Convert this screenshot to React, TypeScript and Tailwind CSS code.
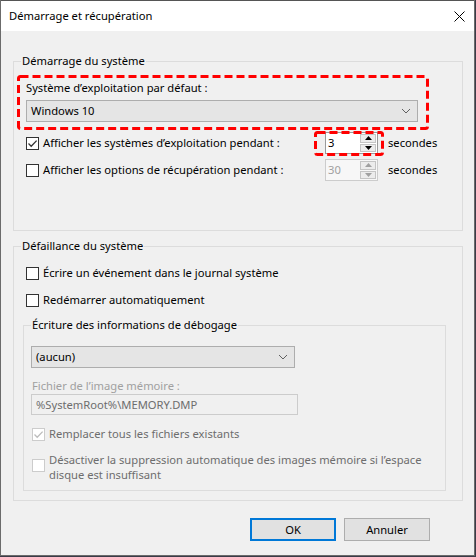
import type { ReactNode } from "react";

const font = "font-['Noto_Sans',sans-serif] text-[11.2px] leading-4";

function CheckBox({ checked, disabled }: { checked?: boolean; disabled?: boolean }) {
  return (
    <span
      className={`flex h-[13px] w-[13px] shrink-0 items-center justify-center border bg-white ${
        disabled ? "border-[#cccccc]" : "border-[#333333]"
      }`}
    >
      {checked && (
        <svg width="11" height="11" viewBox="0 0 11 11">
          <path
            d="M1.5 5.5 L4.2 8.2 L9.6 2.6"
            fill="none"
            stroke={disabled ? "#bcbcbc" : "#333333"}
            strokeWidth="1.3"
          />
        </svg>
      )}
    </span>
  );
}

function CheckRow({
  label,
  checked,
  disabled,
  className = "",
}: {
  label: ReactNode;
  checked?: boolean;
  disabled?: boolean;
  className?: string;
}) {
  return (
    <div className={`flex items-center gap-[4px] ${className}`}>
      <CheckBox checked={checked} disabled={disabled} />
      <span className={disabled ? "text-[#6d6d6d]" : "text-black"}>{label}</span>
    </div>
  );
}

function Arrow({ up, disabled }: { up?: boolean; disabled?: boolean }) {
  return (
    <svg width="7" height="4" viewBox="0 0 7 4">
      <path d={up ? "M0 4 L3.5 0 L7 4 Z" : "M0 0 L3.5 4 L7 0 Z"} fill={disabled ? "#a0a0a0" : "#000000"} />
    </svg>
  );
}

function Spinner({ value, disabled }: { value: string; disabled?: boolean }) {
  return (
    <div
      className={`flex h-[22px] w-[53px] border ${
        disabled ? "border-[#cccccc] bg-[#f7f7f7]" : "border-[#9a9a9a] bg-white"
      }`}
    >
      <span className={`flex-1 pl-[2px] leading-[20px] ${disabled ? "text-[#a0a0a0]" : "text-black"}`}>{value}</span>
      <div className="flex w-[17px] flex-col gap-[1px] py-[1px] pr-[1px]">
        <div className="flex flex-1 items-center justify-center border border-[#c4c4c4] bg-[#ececec]">
          <Arrow up disabled={disabled} />
        </div>
        <div className="flex flex-1 items-center justify-center border border-[#c4c4c4] bg-[#ececec]">
          <Arrow disabled={disabled} />
        </div>
      </div>
    </div>
  );
}

function Combo({ value, className = "" }: { value: string; className?: string }) {
  return (
    <div className={`flex h-[22px] items-center justify-between border border-[#adadad] bg-[#e5e5e5] pl-[4px] pr-[6px] ${className}`}>
      <span>{value}</span>
      <svg width="10" height="6" viewBox="0 0 10 6">
        <path d="M1 1 L5 5 L9 1" fill="none" stroke="#606060" strokeWidth="1" />
      </svg>
    </div>
  );
}

function DashedMark({ className }: { className: string }) {
  return (
    <svg className={`pointer-events-none absolute ${className}`} preserveAspectRatio="none">
      <rect
        x="1.5"
        y="1.5"
        width="calc(100% - 3px)"
        height="calc(100% - 3px)"
        rx="2"
        fill="none"
        stroke="#ff0000"
        strokeWidth="3"
        strokeDasharray="8 4"
      />
    </svg>
  );
}

export default function App() {
  return (
    <div className={`h-[557px] w-[476px] overflow-hidden bg-[#3b3b48] ${font}`}>
      <div className="h-[556px] w-[475px] border-x border-b border-[#6b6b6b] bg-[#f0f0f0]">
        {/* title bar */}
        <div className="flex h-[31px] items-center justify-between border-t border-[#555555] bg-white pl-[8px] pr-[9px]">
          <span className="text-black">Démarrage et récupération</span>
          <svg width="11" height="11" viewBox="0 0 11 11">
            <path d="M0.5 0.5 L10.5 10.5 M10.5 0.5 L0.5 10.5" stroke="#000000" strokeWidth="1" />
          </svg>
        </div>

        {/* startup */}
        <fieldset className="ml-[12px] mt-[22px] w-[450px] border border-[#dcdcdc] pb-[49px]">
          <legend className="ml-[7px] px-[1px]">Démarrage du système</legend>

          <div className="relative ml-[3px] mt-[6px] w-[412px] pb-[8px] pl-[9px] pt-[5px]">
            <DashedMark className="inset-0 h-full w-full" />
            <div>Système d’exploitation par défaut :</div>
            <Combo value="Windows 10" className="mt-[4px] w-[392px]" />
          </div>

          <div className="ml-[12px] mt-[2px] flex items-center">
            <CheckRow checked label="Afficher les systèmes d’exploitation pendant :" className="w-[299px]" />
            <div className="relative">
              <Spinner value="3" />
              <DashedMark className="-left-[11px] -top-[1px] h-[25px] w-[70px]" />
            </div>
            <span className="ml-[10px]">secondes</span>
          </div>

          <div className="ml-[12px] mt-[5px] flex items-center">
            <CheckRow label="Afficher les options de récupération pendant :" className="w-[299px]" />
            <Spinner value="30" disabled />
            <span className="ml-[10px]">secondes</span>
          </div>
        </fieldset>

        {/* failure */}
        <fieldset className="ml-[12px] mt-[7px] w-[450px] border border-[#dcdcdc] pb-[9px]">
          <legend className="ml-[7px] px-[1px]">Défaillance du système</legend>

          <CheckRow label="Écrire un événement dans le journal système" className="ml-[12px] mt-[11px]" />
          <CheckRow label="Redémarrer automatiquement" className="ml-[12px] mt-[11px]" />

          <fieldset className="ml-[9px] mt-[9px] w-[423px] border border-[#dcdcdc] pb-[8px]">
            <legend className="ml-[7px] px-[1px]">Écriture des informations de débogage</legend>

            <Combo value="(aucun)" className="ml-[7px] mt-[13px] w-[264px]" />

            <div className="ml-[8px] mt-[10px] text-[#a0a0a0]">Fichier de l’image mémoire :</div>
            <div className="ml-[7px] flex h-[21px] w-[267px] items-center border border-[#cccccc] bg-[#f0f0f0] pl-[4px] text-[#6d6d6d]">
              %SystemRoot%\MEMORY.DMP
            </div>

            <CheckRow checked disabled label="Remplacer tous les fichiers existants" className="ml-[8px] mt-[11px]" />

            <div className="ml-[8px] mt-[10px] flex items-start gap-[4px]">
              <span className="mt-[7px]">
                <CheckBox disabled />
              </span>
              <span className="whitespace-nowrap leading-[15px] text-[#6d6d6d]">
                Désactiver la suppression automatique des images mémoire si l’espace
                <br />
                disque est insuffisant
              </span>
            </div>
          </fieldset>
        </fieldset>

        {/* buttons */}
        <div className="mt-[17px] flex justify-end gap-[8px] pr-[44px]">
          <button className="flex h-[23px] w-[86px] items-center justify-center border-2 border-[#0078d7] bg-[#e1e1e1] text-black">
            OK
          </button>
          <button className="flex h-[23px] w-[86px] items-center justify-center border border-[#adadad] bg-[#e1e1e1] text-black">
            Annuler
          </button>
        </div>
      </div>
    </div>
  );
}
